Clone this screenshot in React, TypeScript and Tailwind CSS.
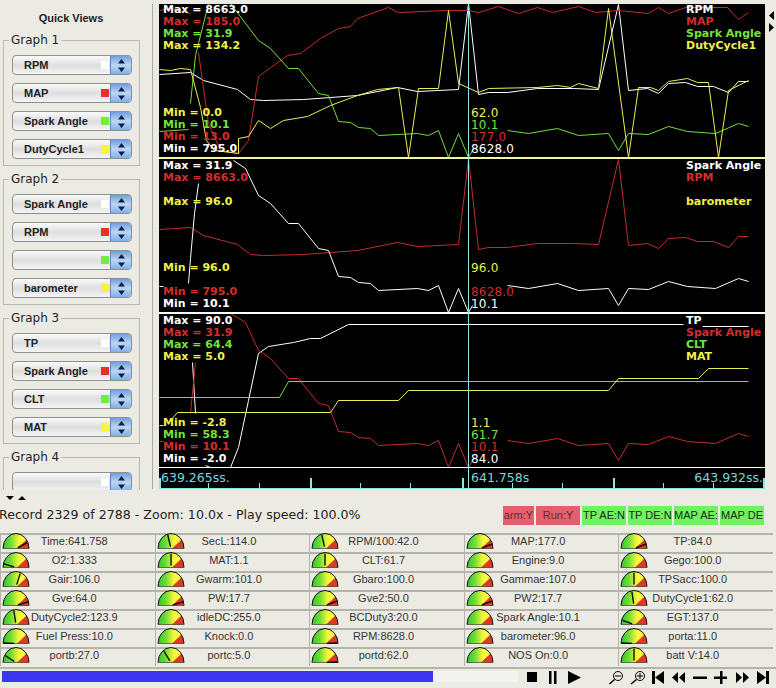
import { Fragment } from "react";

type Pt = [number, number];
type Line = { color: string; segs: Pt[][] };

const RED = "#c42c2c";
const GREEN = "#70e03a";
const YELLOW = "#eeee50";

const shift = (pts: Pt[], dy: number): Pt[] => pts.map(([x, y]) => [x, y + dy]);
const pointsOf = (pts: Pt[]) => pts.map((p) => p.join(",")).join(" ");

// traced from panel 1, reused lower down
const rpm: Pt[] = [
  [159, 74], [190, 72], [203, 80], [237, 89], [250, 99], [263, 100], [303, 99], [357, 95],
  [397, 87], [417, 91], [458, 89], [468, 3], [478, 94], [488, 92], [507, 92], [537, 88],
  [573, 88], [598, 89], [618, 4], [628, 90], [647, 88], [658, 93], [668, 83], [685, 82],
  [697, 86], [713, 86], [728, 92], [738, 81], [748, 81],
];
const sparkRight: Pt[] = [
  [258, 40], [270, 48], [288, 68], [298, 68], [318, 93], [328, 95], [338, 121], [350, 122],
  [358, 127], [370, 128], [378, 135], [417, 133], [428, 135], [438, 130], [448, 157],
  [458, 133], [468, 157], [472, 150],
];
const sparkEnd: Pt[] = [
  [507, 130], [528, 133], [557, 128], [578, 135], [608, 133], [618, 150], [628, 133],
  [648, 134], [668, 126], [687, 131], [715, 133], [738, 123], [748, 126],
];

const panel1: Line[] = [
  { color: "#ffffff", segs: [rpm] },
  {
    color: RED,
    segs: [
      [[159, 10], [170, 8], [190, 13]],
      [
        [198, 52], [208, 123], [220, 150], [238, 153], [248, 140], [258, 76], [287, 55],
        [300, 53], [320, 38], [338, 28], [350, 26], [357, 18], [388, 7], [398, 12], [447, 10],
        [468, 10], [478, 12], [498, 6], [518, 13], [537, 7], [552, 12], [578, 6], [595, 12],
        [618, 10], [648, 13], [658, 7], [668, 13], [685, 7], [727, 7], [738, 19], [748, 12],
      ],
    ],
  },
  {
    color: GREEN,
    segs: [
      [[159, 131], [188, 129]],
      [[190, 103], [195, 55], [208, 3], [230, 3], ...sparkRight],
      sparkEnd,
    ],
  },
  {
    color: YELLOW,
    segs: [
      [
        [159, 69], [170, 70], [180, 68], [190, 69], [200, 107], [206, 140], [214, 150], [238, 153],
        [238, 138], [248, 136], [258, 120], [270, 128], [283, 120], [307, 116], [330, 105],
        [357, 95], [377, 89], [398, 87], [408, 157], [418, 88], [438, 88], [448, 10], [458, 83],
        [478, 92], [488, 88], [537, 87], [557, 85], [570, 87], [578, 83], [598, 88], [608, 8],
        [628, 157], [638, 87], [650, 87], [658, 90], [668, 81], [687, 78], [697, 82], [708, 82],
        [718, 157], [728, 90], [748, 80],
      ],
    ],
  },
];

const panel2: Line[] = [
  { color: RED, segs: [shift(rpm, 155)] },
  {
    color: "#ffffff",
    segs: [
      [[159, 286], [163, 286]],
      [[198, 183], [194, 213], [190, 258], [188, 283]],
      [[233, 160], [245, 168], ...shift(sparkRight, 155)],
      shift(sparkEnd, 155),
    ],
  },
];

const panel3: Line[] = [
  {
    color: "#ffffff",
    segs: [
      [[192, 362], [195, 413]],
      [
        [205, 465], [210, 467], [230, 467], [238, 447], [248, 400], [258, 353], [268, 346],
        [293, 342], [310, 338], [320, 338], [348, 324], [683, 324],
      ],
      [[702, 326], [748, 326]],
    ],
  },
  {
    color: RED,
    segs: [
      [[159, 441], [163, 441]],
      [[190, 413], [195, 362]],
      [[213, 313], [230, 313], [245, 322], ...shift(sparkRight, 310)],
      shift(sparkEnd, 310),
    ],
  },
  { color: GREEN, segs: [[[159, 397], [279, 397], [288, 381], [748, 381]]] },
  {
    color: YELLOW,
    segs: [
      [[159, 425], [163, 425]],
      [
        [170, 420], [177, 412], [330, 412], [338, 400], [398, 400], [408, 390], [608, 390],
        [618, 378], [698, 378], [708, 368], [748, 368],
      ],
    ],
  },
];

type Row = { text: string; cls: string };
const w = "text-white";
const r = "text-[#d62c2c]";
const g = "text-[#70e63a]";
const y = "text-[#f0f04a]";

function Rows({ rows, cls }: { rows: Row[]; cls: string }) {
  return (
    <div className={`absolute flex flex-col whitespace-pre leading-[12px] ${cls}`}>
      {rows.map((row, i) => (
        <span key={i} className={`h-[12px] ${row.cls}`}>
          {row.text}
        </span>
      ))}
    </div>
  );
}

function Panel({
  top,
  lines,
  maxRows,
  minRows,
  nowRows,
  names,
  border,
  first,
}: {
  top: number;
  lines: Line[];
  maxRows: Row[];
  minRows: Row[];
  nowRows: Row[];
  names: Row[];
  border: string;
  first?: boolean;
}) {
  return (
    <div className={`relative ${border}`}>
      <svg
        className="absolute inset-0 h-full w-full"
        viewBox={`159 ${top} 606 153`}
        preserveAspectRatio="none"
      >
        <g transform="translate(0.5 0.5)">
          {lines.map((line) =>
            line.segs.map((seg, i) => (
              <polyline
                key={line.color + i}
                points={pointsOf(seg)}
                fill="none"
                stroke={line.color}
                strokeWidth="1"
              />
            ))
          )}
        </g>
      </svg>
      <Rows rows={maxRows} cls={`left-[4px] font-bold ${first ? "top-0" : "top-px"}`} />
      <Rows rows={minRows} cls="bottom-[2px] left-[4px] font-bold" />
      <Rows rows={nowRows} cls="bottom-[2px] left-[312px] text-[12px] tracking-[0.2px]" />
      <Rows rows={names} cls={`left-[527px] font-bold ${first ? "top-0" : "top-px"}`} />
    </div>
  );
}

function Combo({ label, swatch }: { label: string; swatch: string }) {
  return (
    <div className="flex h-[20px] w-[120px] items-center overflow-hidden rounded-[4px] border border-[#8f8f8f] bg-gradient-to-b from-[#fbfbfb] via-[#dedede] to-[#f4f4f4]">
      <span className="flex-1 truncate pl-[11px] text-[11px] font-bold leading-[18px] text-[#222]">
        {label}
      </span>
      <span className={`mr-px h-[8px] w-[8px] ${swatch}`} />
      <span className="flex h-full w-[21px] flex-col items-center justify-center border-l border-[#5f86c4] bg-gradient-to-b from-[#6f9fe0] via-[#bcd6f5] to-[#7fb0ee]">
        <svg width="7" height="13" viewBox="0 0 7 13">
          <path d="M3.5 0 7 4.5H0Z M3.5 13 0 8.5H7Z" fill="#102040" />
        </svg>
      </span>
    </div>
  );
}

function GraphGroup({ title, items }: { title: string; items: [string, string][] }) {
  return (
    <fieldset className="ml-[3px] h-[133px] w-[137px] shrink-0 border border-[#b9b9b4]">
      <legend className="ml-[5px] px-[2px] font-['DejaVu_Sans',sans-serif] text-[12px] leading-[14px] text-[#222]">
        {title}
      </legend>
      <div className="ml-[8px] mt-[8px] flex flex-col gap-[8px]">
        {items.map(([label, swatch], i) => (
          <Combo key={i} label={label} swatch={swatch} />
        ))}
      </div>
    </fieldset>
  );
}

function Gauge({ needle }: { needle?: number }) {
  const a = needle === undefined ? 0 : (needle * Math.PI) / 180;
  return (
    <svg width="28" height="16" viewBox="0 0 28 16" className="-mt-[2px] ml-[1px] shrink-0">
      <defs>
        <linearGradient id="dome" x1="0" x2="1" y1="0" y2="0">
          <stop offset="0" stopColor="#30c830" />
          <stop offset="0.3" stopColor="#70dc34" />
          <stop offset="0.6" stopColor="#f2f53c" />
          <stop offset="0.8" stopColor="#ffff40" />
        </linearGradient>
      </defs>
      <path d="M1 15.5A13 15 0 0 1 27 15.5Z" fill="url(#dome)" />
      <path d="M15 15.5 24.5 6.5A13 15 0 0 1 27 15.5Z" fill="#dc3a26" />
      <path d="M1 15.5A13 15 0 0 1 27 15.5" fill="none" stroke="#111" strokeWidth="1" />
      <path d="M1 15.5H27" fill="none" stroke="#222" strokeWidth="0.6" />
      {needle !== undefined ? (
        <line
          x1={14 + 2 * Math.sin(a)}
          y1={15.5 - 2 * Math.cos(a)}
          x2={14 + 12.5 * Math.sin(a)}
          y2={15.5 - 14 * Math.cos(a)}
          stroke="#000"
          strokeWidth="1.3"
        />
      ) : null}
    </svg>
  );
}

const gauges: [string, number?][] = [
  ["Time:641.758", 65], ["SecL:114.0", -15], ["RPM/100:42.0", -15], ["MAP:177.0", 72], ["TP:84.0", 72],
  ["O2:1.333", -75], ["MAT:1.1", 0], ["CLT:61.7", 0], ["Engine:9.0"], ["Gego:100.0"],
  ["Gair:106.0", 20], ["Gwarm:101.0"], ["Gbaro:100.0"], ["Gammae:107.0"], ["TPSacc:100.0", 0],
  ["Gve:64.0", 75], ["PW:17.7", 75], ["Gve2:50.0", 72], ["PW2:17.7", 72], ["DutyCycle1:62.0", -10],
  ["DutyCycle2:123.9", -10], ["idleDC:255.0"], ["BCDuty3:20.0"], ["Spark Angle:10.1"], ["EGT:137.0", -72],
  ["Fuel Press:10.0", -88], ["Knock:0.0"], ["RPM:8628.0", 88], ["barometer:96.0"], ["porta:11.0", -88],
  ["portb:27.0", -60], ["portc:5.0", -35], ["portd:62.0", 88], ["NOS On:0.0"], ["batt V:14.0", 0],
];

const pills = [
  { text: "arm:Y", cls: "w-[31px] bg-[#e2606e] text-[#6e2630]" },
  { text: "Run:Y", cls: "w-[44px] bg-[#e2606e] text-[#6e2630]" },
  { text: "TP AE:N", cls: "w-[44px] bg-[#72f062] text-[#0f300f]" },
  { text: "TP DE:N", cls: "w-[44px] bg-[#72f062] text-[#0f300f]" },
  { text: "MAP AE:", cls: "w-[44px] bg-[#72f062] text-[#0f300f]" },
  { text: "MAP DE", cls: "w-[44px] bg-[#72f062] text-[#0f300f]" },
];

function Controls() {
  return (
    <svg width="246" height="15" viewBox="0 0 246 15" className="mt-[2px] shrink-0" fill="#000">
      <rect x="1" y="1" width="10" height="10" />
      <rect x="23" y="0" width="2.5" height="13" />
      <rect x="28" y="0" width="2.5" height="13" />
      <path d="M42 0 55 6.5 42 13Z" />
      {/* zoom out / zoom in */}
      <g fill="none" stroke="#000" strokeWidth="1">
        <circle cx="92" cy="5" r="4.5" />
        <path d="M89 5H95" />
        <path d="M88.5 8.5 83.5 13" strokeWidth="1.5" />
        <circle cx="114" cy="5" r="4.5" />
        <path d="M111 5H117M114 2V8" />
        <path d="M110.5 8.5 105 13" strokeWidth="1.5" />
      </g>
      <rect x="126" y="0" width="3" height="13" />
      <path d="M129 6.5 138 0V13Z" />
      <path d="M146 6.5 152 1V12Z M153 6.5 159 1V12Z" />
      <rect x="167" y="5.5" width="14" height="2.5" />
      <path d="M188 5.5H194V0H196.5V5.5H201V8H196.5V13H194V8H188Z" />
      <path d="M210 1 216 6.5 210 12Z M217 1 223 6.5 217 12Z" />
      <path d="M231 0 240 6.5 231 13Z" />
      <rect x="240" y="0" width="3" height="13" />
    </svg>
  );
}

export default function App() {
  const bigTicks = [159, 310, 462, 613, 763];
  const smallTicks = [208, 259, 360, 410, 512, 562, 663, 713];
  return (
    <div className="flex h-[688px] w-[776px] flex-col overflow-hidden bg-[#ecebe3] font-['Liberation_Sans',sans-serif] text-[#333]">
      {/* top: quick views and charts */}
      <div className="flex h-[490px] shrink-0">
        <div className="flex h-[490px] w-[152px] shrink-0 flex-col gap-[6px] overflow-hidden">
          <div className="h-[27px] shrink-0 pr-[10px] pt-[12px] text-center text-[11px] font-bold leading-[13px] text-[#222]">
            Quick Views
          </div>
          <GraphGroup
            title="Graph 1"
            items={[["RPM", "bg-[#ffffff]"], ["MAP", "bg-[#e8302c]"], ["Spark Angle", "bg-[#72ee3a]"], ["DutyCycle1", "bg-[#f4f43c]"]]}
          />
          <GraphGroup
            title="Graph 2"
            items={[["Spark Angle", "bg-[#ffffff]"], ["RPM", "bg-[#e8302c]"], ["", "bg-[#72ee3a]"], ["barometer", "bg-[#f4f43c]"]]}
          />
          <GraphGroup
            title="Graph 3"
            items={[["TP", "bg-[#ffffff]"], ["Spark Angle", "bg-[#e8302c]"], ["CLT", "bg-[#72ee3a]"], ["MAT", "bg-[#f4f43c]"]]}
          />
          <GraphGroup title="Graph 4" items={[["", "bg-[#ffffff]"]]} />
        </div>
        <div className="mt-[4px] h-[485px] w-px shrink-0 bg-[#a9a9a4]" />
        <div className="relative ml-[6px] mt-[4px] grid h-[485px] w-[606px] shrink-0 grid-rows-[155px_155px_154px_21px] overflow-hidden bg-black font-['DejaVu_Sans',sans-serif] text-[11px]">
          <Panel
            first
            top={4}
            lines={panel1}
            border="border-b-2 border-[#f4f4a8]"
            maxRows={[
              { text: "Max = 8663.0", cls: w },
              { text: "Max = 185.0", cls: r },
              { text: "Max = 31.9", cls: g },
              { text: "Max = 134.2", cls: y },
            ]}
            minRows={[
              { text: "Min = 0.0", cls: y },
              { text: "Min = 10.1", cls: g },
              { text: "Min = 13.0", cls: r },
              { text: "Min = 795.0", cls: w },
            ]}
            nowRows={[
              { text: "62.0", cls: y },
              { text: "10.1", cls: g },
              { text: "177.0", cls: r },
              { text: "8628.0", cls: w },
            ]}
            names={[
              { text: "RPM", cls: w },
              { text: "MAP", cls: r },
              { text: "Spark Angle", cls: g },
              { text: "DutyCycle1", cls: y },
            ]}
          />
          <Panel
            top={159}
            lines={panel2}
            border="border-b-2 border-white"
            maxRows={[
              { text: "Max = 31.9", cls: w },
              { text: "Max = 8663.0", cls: r },
              { text: " ", cls: g },
              { text: "Max = 96.0", cls: y },
            ]}
            minRows={[
              { text: "Min = 96.0", cls: y },
              { text: " ", cls: g },
              { text: "Min = 795.0", cls: r },
              { text: "Min = 10.1", cls: w },
            ]}
            nowRows={[
              { text: "96.0", cls: y },
              { text: " ", cls: g },
              { text: "8628.0", cls: r },
              { text: "10.1", cls: w },
            ]}
            names={[
              { text: "Spark Angle", cls: w },
              { text: "RPM", cls: r },
              { text: " ", cls: g },
              { text: "barometer", cls: y },
            ]}
          />
          <Panel
            top={314}
            lines={panel3}
            border="border-b border-white"
            maxRows={[
              { text: "Max = 90.0", cls: w },
              { text: "Max = 31.9", cls: r },
              { text: "Max = 64.4", cls: g },
              { text: "Max = 5.0", cls: y },
            ]}
            minRows={[
              { text: "Min = -2.8", cls: y },
              { text: "Min = 58.3", cls: g },
              { text: "Min = 10.1", cls: r },
              { text: "Min = -2.0", cls: w },
            ]}
            nowRows={[
              { text: "1.1", cls: y },
              { text: "61.7", cls: g },
              { text: "10.1", cls: r },
              { text: "84.0", cls: w },
            ]}
            names={[
              { text: "TP", cls: w },
              { text: "Spark Angle", cls: r },
              { text: "CLT", cls: g },
              { text: "MAT", cls: y },
            ]}
          />
          {/* time axis */}
          <div className="relative flex justify-between border-b border-[#8fe6e6] pl-[2px] pr-[2px] pt-[2px] text-[12.5px] leading-[15px] text-[#7fd4d8]">
            <span>639.265ss.</span>
            <span className="absolute left-[312px] top-[2px]">641.758s</span>
            <span>643.932ss.</span>
            {bigTicks.map((x) => (
              <Fragment key={x}>
                <span className="absolute bottom-0 h-[10px] w-[2px] bg-[#8fe6e6]" style={{ left: x - 159 }} />
              </Fragment>
            ))}
            {smallTicks.map((x) => (
              <span key={x} className="absolute bottom-0 h-[5px] w-px bg-[#8fe6e6]" style={{ left: x - 159 }} />
            ))}
          </div>
          <div className="absolute bottom-0 left-[309px] top-0 w-px bg-[#8fe6e6]" />
        </div>
        <div className="ml-[3px] mt-[11px] flex flex-col gap-[3px]">
          <svg width="7" height="9" viewBox="0 0 7 9">
            <path d="M6 0V9L1 4.5Z" fill="#000" />
          </svg>
          <svg width="7" height="9" viewBox="0 0 7 9">
            <path d="M1 0V9L6 4.5Z" fill="#000" />
          </svg>
        </div>
      </div>

      {/* splitter arrows */}
      <div className="flex h-[16px] shrink-0 gap-[4px] pl-[6px] pt-[6px]">
        <svg width="8" height="4" viewBox="0 0 8 4">
          <path d="M0 0H8L4 4Z" fill="#000" />
        </svg>
        <svg width="8" height="4" viewBox="0 0 8 4">
          <path d="M0 4H8L4 0Z" fill="#000" />
        </svg>
      </div>

      {/* status */}
      <div className="flex h-[19px] shrink-0 items-center justify-between pr-[12px]">
        <span className="-ml-px whitespace-nowrap font-['DejaVu_Sans',sans-serif] text-[12.6px] text-[#222]">
          Record 2329 of 2788 - Zoom: 10.0x - Play speed: 100.0%
        </span>
        <div className="flex gap-[2px]">
          {pills.map((p) => (
            <span
              key={p.text}
              className={`h-[19px] overflow-hidden whitespace-nowrap text-center text-[11px] leading-[19px] ${p.cls}`}
            >
              {p.text}
            </span>
          ))}
        </div>
      </div>

      {/* gauges */}
      <div className="mt-[8px] grid w-[773px] shrink-0 grid-cols-5 grid-rows-[repeat(7,19px)] text-[11px] text-[#333]">
        {gauges.map(([label, needle]) => (
          <div key={label} className="flex border-l border-t-2 border-[#b4b4ac]">
            <Gauge needle={needle} />
            <span className="flex-1 whitespace-nowrap pr-[36px] text-center leading-[13px]">{label}</span>
          </div>
        ))}
      </div>

      {/* transport bar */}
      <div className="mt-px flex h-[21px] shrink-0 items-start gap-[8px] border-t-2 border-[#b4b4ac] pl-[2px]">
        <div className="mt-[2px] h-[11px] w-[516px] shrink-0 bg-[#f3f3f0]">
          <div className="h-full w-[431px] bg-[#3b37ec]" />
        </div>
        <Controls />
      </div>
    </div>
  );
}
